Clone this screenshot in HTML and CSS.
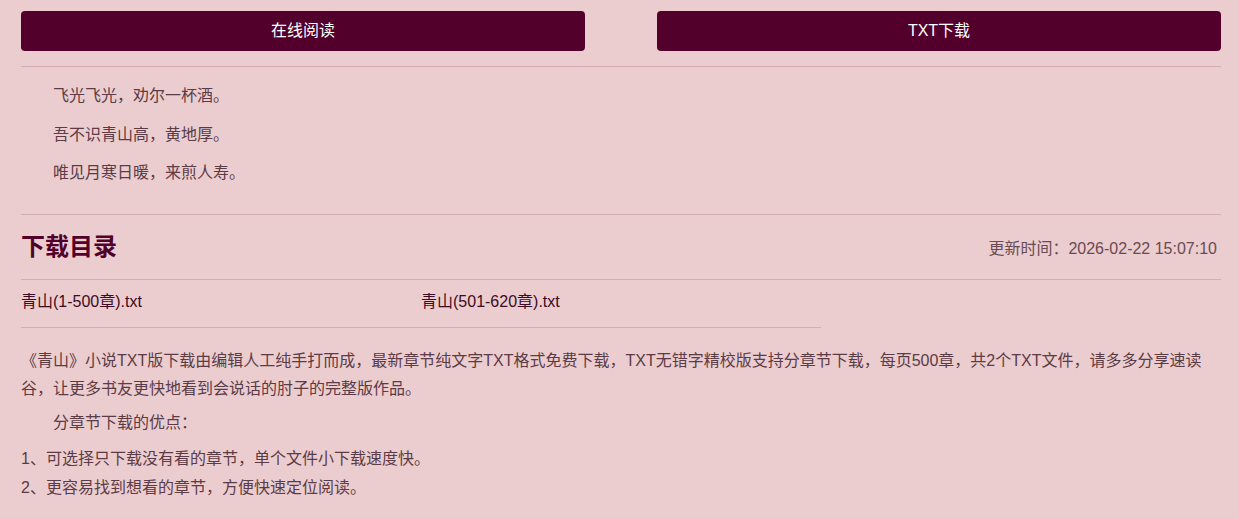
FILE: index.html
```html
<!DOCTYPE html>
<html lang="zh-CN">
<head>
  <meta charset="UTF-8" />
  <meta name="viewport" content="width=device-width, initial-scale=1.0"/>
  <title>青山 TXT下载</title>
  <link rel="stylesheet" href="styles.css">
</head>
<body>
  <div class="wrap">
    <div class="btns">
      <a href="#" class="btn">在线阅读</a>
      <a href="#" class="btn">TXT下载</a>
    </div>

    <div class="intro">
      <p>飞光飞光，劝尔一杯酒。</p>
      <p>吾不识青山高，黄地厚。</p>
      <p>唯见月寒日暖，来煎人寿。</p>
    </div>

    <div class="list-head">
      <h2>下载目录</h2>
      <span class="update">更新时间：2026-02-22 15:07:10</span>
    </div>

    <ul class="files">
      <li><a href="#">青山(1-500章).txt</a></li>
      <li><a href="#">青山(501-620章).txt</a></li>
    </ul>

    <div class="desc">
      <p>《青山》小说TXT版下载由编辑人工纯手打而成，最新章节纯文字TXT格式免费下载，TXT无错字精校版支持分章节下载，每页500章，共2个TXT文件，请多多分享速读谷，让更多书友更快地看到会说话的肘子的完整版作品。</p>
      <p class="indent">分章节下载的优点：</p>
      <p class="points">1、可选择只下载没有看的章节，单个文件小下载速度快。<br>2、更容易找到想看的章节，方便快速定位阅读。</p>
    </div>
  </div>
</body>
</html>
```

FILE: styles.css
```css
/* Basic resets & layout */
body {
  margin: 0;
  font-family: "Liberation Sans", "Noto Sans CJK SC", sans-serif;
  font-size: 16px;
  background: #ebcdcf;
  color: #5b3b45;
}

.wrap {
  width: 1200px;
  margin: 0 0 0 21px;
}

/* top buttons */
.btns {
  display: flex;
  justify-content: space-between;
  padding: 11px 0 15px;
  border-bottom: 1px solid #d2adb2;
}

.btn {
  display: block;
  width: 564px;
  height: 40px;
  line-height: 40px;
  text-align: center;
  background: #52002b;
  color: #fff;
  border-radius: 4px;
  text-decoration: none;
}

/* poem */
.intro {
  padding: 16px 0 28px;
}

.intro p {
  margin: 0 0 13px;
  line-height: 1.6;
  text-indent: 32px;
}
.intro p:last-child {
  margin-bottom: 0;
}

/* download list */
.list-head {
  display: flex;
  align-items: center;
  justify-content: space-between;
  height: 64px;
  border-top: 1px solid #d2adb2;
  border-bottom: 1px solid #d2adb2;
}

.list-head h2 {
  margin: 0;
  font-size: 24px;
  line-height: 24px;
  color: #52002b;
}

.update {
  font-size: 16px;
  padding-right: 4px;
  color: #6a4a53;
}

.files {
  display: flex;
  width: 800px;
  margin: 0;
  padding: 10px 0 13px;
  list-style: none;
  border-bottom: 1px solid #d2adb2;
}

.files li {
  width: 400px;
  line-height: 24px;
}

.files a {
  color: #3e0a22;
  text-decoration: none;
}

/* description */
.desc {
  padding-top: 19px;
}

.desc p {
  margin: 0 0 6px;
  line-height: 28px;
}

.desc .indent {
  text-indent: 32px;
  margin-bottom: 7px;
}

.desc .points {
  line-height: 29px;
}
```
